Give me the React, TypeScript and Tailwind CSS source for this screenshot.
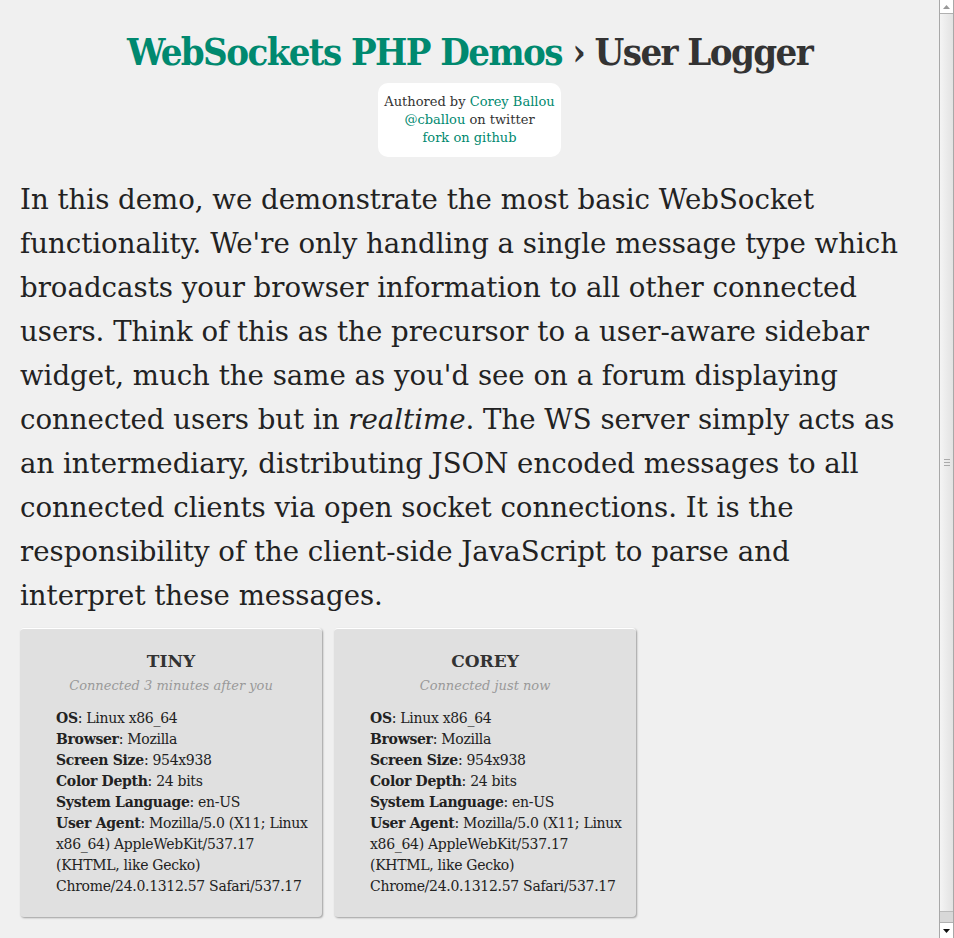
const users = [
  { name: "TINY", when: "Connected 3 minutes after you" },
  { name: "COREY", when: "Connected just now" },
];

const INFO = [
  ["OS", "Linux x86_64"],
  ["Browser", "Mozilla"],
  ["Screen Size", "954x938"],
  ["Color Depth", "24 bits"],
  ["System Language", "en-US"],
  ["User Agent", "Mozilla/5.0 (X11; Linux x86_64) AppleWebKit/537.17 (KHTML, like Gecko) Chrome/24.0.1312.57 Safari/537.17"],
];

function UserCard({ name, when }: { name: string; when: string }) {
  return (
    <div className="w-[302px] rounded-[4px] bg-[#e0e0e0] border-t border-white shadow-[1px_1px_2px_rgba(0,0,0,0.35)] pt-[21px] pb-[20px] pl-[36px] pr-[4px]">
      <h2 className="-ml-[32px] text-center text-[17px] leading-[22px] font-bold text-[#333]">{name}</h2>
      <p className="-ml-[32px] mt-[4px] text-center text-[13px] leading-[20px] italic text-[#999]">{when}</p>
      <ul className="mt-[12px] text-[14px] leading-[21px] tracking-[-0.3px] text-[#222]">
        {INFO.map(([label, value]) => (
          <li key={label}>
            <b className="font-bold">{label}</b>: {value}
          </li>
        ))}
      </ul>
    </div>
  );
}

// fake browser scrollbar, as in the screenshot
function Scrollbar() {
  return (
    <div className="flex h-[938px] w-[15px] shrink-0 flex-col border-x border-[#a8a8a8] bg-[#f4f4f4]">
      <div className="flex h-[14px] items-center justify-center border-b border-[#b0b0b0] bg-white">
        <svg width="7" height="4" viewBox="0 0 7 4">
          <path d="M0 4 L3.5 0 L7 4 Z" fill="#999" />
        </svg>
      </div>
      <div className="flex flex-1 items-center justify-center border-b border-[#bbb] bg-gradient-to-r from-[#f4f4f4] to-[#e2e2e2]">
        <div className="flex flex-col gap-[2px]">
          <span className="block h-px w-[6px] bg-[#aaa]" />
          <span className="block h-px w-[6px] bg-[#aaa]" />
          <span className="block h-px w-[6px] bg-[#aaa]" />
        </div>
      </div>
      <div className="h-[11px] border-b border-[#b0b0b0] bg-[#d8d8d8]" />
      <div className="flex h-[15px] items-center justify-center bg-white">
        <svg width="7" height="4" viewBox="0 0 7 4">
          <path d="M0 0 L7 0 L3.5 4 Z" fill="#111" />
        </svg>
      </div>
    </div>
  );
}

export default function App() {
  return (
    <div className="flex h-[938px] overflow-hidden bg-[#f0f0f0]">
      <div className="w-[939px] shrink-0 px-[20px] pb-[20px] pt-[28px] font-['DejaVu_Serif',serif] text-[#222]">
        {/* HEADER */}
        <h1 className="text-center font-['DejaVu_Serif_Condensed','DejaVu_Serif',serif] text-[38px] leading-[48px] font-bold tracking-[-1.6px]">
          <a href="#" className="text-[#00896f]">WebSockets PHP Demos</a>
          <span className="text-[#333]"> › User Logger</span>
        </h1>

        <div className="mx-auto mt-[7px] w-[183px] rounded-[10px] bg-white py-[10px] text-center text-[13px] leading-[18px] text-[#333]">
          Authored by <a href="#" className="text-[#00896f]">Corey Ballou</a>
          <br />
          <a href="#" className="text-[#00896f]">@cballou</a> on twitter
          <br />
          <a href="#" className="text-[#00896f]">fork on github</a>
        </div>

        {/* INTRO */}
        <p className="mt-[21px] text-[27.6px] leading-[44px] text-[#222]">
          In this demo, we demonstrate the most basic WebSocket functionality. We're only handling a single message
          type which broadcasts your browser information to all other connected users. Think of this as the precursor
          to a user-aware sidebar widget, much the same as you'd see on a forum displaying connected users but in{" "}
          <em>realtime</em>. The WS server simply acts as an intermediary, distributing JSON encoded messages to all
          connected clients via open socket connections. It is the responsibility of the client-side JavaScript to
          parse and interpret these messages.
        </p>

        {/* USERS */}
        <div className="mt-[10px] flex gap-[12px]">
          {users.map((u) => (
            <UserCard key={u.name} name={u.name} when={u.when} />
          ))}
        </div>
      </div>
      <Scrollbar />
    </div>
  );
}
